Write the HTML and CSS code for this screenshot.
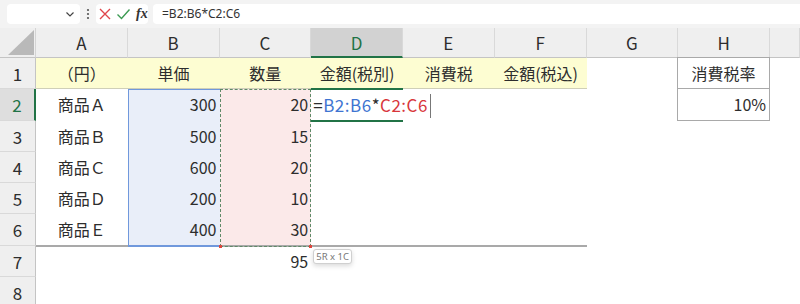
FILE: index.html
```html
<!DOCTYPE html>
<html>
  <head>
    <meta charset="utf-8" />
    <title>Book1 - 消費税</title>
    <link rel="stylesheet" href="styles.css">
  </head>
  <body>
    <div class="fbar">
      <div class="namebox">
        <svg width="10" height="10" viewBox="0 0 10 10"><path d="M1.5 3.5 L5 7 L8.5 3.5" fill="none" stroke="#444" stroke-width="1.2"/></svg>
      </div>
      <svg class="dots" width="4" height="14" viewBox="0 0 4 14"><circle cx="2" cy="3" r="1.1" fill="#555"/><circle cx="2" cy="7" r="1.1" fill="#555"/><circle cx="2" cy="11" r="1.1" fill="#555"/></svg>
      <div class="fbtns">
        <svg width="14" height="14" viewBox="0 0 14 14"><path d="M2 2 L12 12 M12 2 L2 12" stroke="#e0464b" stroke-width="1.4" fill="none"/></svg>
        <svg width="15" height="14" viewBox="0 0 15 14"><path d="M1.5 7.5 L5.5 11.5 L13.5 2.5" stroke="#3c9a52" stroke-width="1.4" fill="none"/></svg>
        <span class="fx">fx</span>
      </div>
      <div class="finput">=B2:B6*C2:C6</div>
    </div>

    <div class="sheet">
      <div class="cells">
        <div class="corner"><svg width="28" height="27" viewBox="0 0 28 27"><path d="M27 1 L27 26 L1 26 Z" fill="#b9b9b9"/></svg></div>
        <div class="ch">A</div><div class="ch">B</div><div class="ch">C</div><div class="ch sel">D</div>
        <div class="ch">E</div><div class="ch">F</div><div class="ch">G</div><div class="ch">H</div><div class="ch"></div>

        <div class="rh">1</div>
        <div class="c y mid">（円）</div><div class="c y mid">単価</div><div class="c y mid">数量</div>
        <div class="c y mid">金額(税別)</div><div class="c y mid">消費税</div><div class="c y mid">金額(税込)</div>
        <div class="c"></div><div class="c box mid">消費税率</div><div class="c"></div>

        <div class="rh sel">2</div>
        <div class="c mid">商品Ａ</div><div class="c b num">300</div><div class="c p num">20</div>
        <div class="c edit">=<span class="ref-b">B2:B6</span>*<span class="ref-c">C2:C6</span><span class="caret"></span></div>
        <div class="c"></div><div class="c"></div><div class="c"></div><div class="c box num">10%</div><div class="c"></div>

        <div class="rh">3</div>
        <div class="c mid">商品Ｂ</div><div class="c b num">500</div><div class="c p num">15</div>
        <div class="c"></div><div class="c"></div><div class="c"></div><div class="c"></div><div class="c"></div><div class="c"></div>

        <div class="rh">4</div>
        <div class="c mid">商品Ｃ</div><div class="c b num">600</div><div class="c p num">20</div>
        <div class="c"></div><div class="c"></div><div class="c"></div><div class="c"></div><div class="c"></div><div class="c"></div>

        <div class="rh">5</div>
        <div class="c mid">商品Ｄ</div><div class="c b num">200</div><div class="c p num">10</div>
        <div class="c"></div><div class="c"></div><div class="c"></div><div class="c"></div><div class="c"></div><div class="c"></div>

        <div class="rh">6</div>
        <div class="c mid">商品Ｅ</div><div class="c b num">400</div><div class="c p num">30</div>
        <div class="c"></div><div class="c"></div><div class="c"></div><div class="c"></div><div class="c"></div><div class="c"></div>

        <div class="rh">7</div>
        <div class="c"></div><div class="c"></div><div class="c num">95</div>
        <div class="c"></div><div class="c"></div><div class="c"></div><div class="c"></div><div class="c"></div><div class="c"></div>

        <div class="rh">8</div>
        <div class="c"></div><div class="c"></div><div class="c"></div>
        <div class="c"></div><div class="c"></div><div class="c"></div><div class="c"></div><div class="c"></div><div class="c"></div>
      </div>

      <div class="marks">
        <div class="total-line"></div>
        <div class="range-b"></div>
        <div class="range-c"></div>
        <div class="active"></div>
        <div class="tip">5R x 1C</div>
      </div>
    </div>
  </body>
</html>
```

FILE: styles.css
```css
body{
  margin: 0;
  background: #fff;
  overflow: hidden;
  font-family: "Noto Sans CJK JP", "Noto Sans", sans-serif;
  color: #2d2d2d;
}

/* formula bar */
.fbar{
  display: flex;
  align-items: center;
  height: 28px;
  background: #f3f3f3;
  padding-left: 7px;
}
.namebox{
  width: 73px;
  height: 20px;
  background: #fff;
  border-radius: 4px;
  display: flex;
  justify-content: flex-end;
  align-items: center;
  padding-right: 5px;
  box-sizing: border-box;
}
.dots{
  margin-left: 6px;
}
.fbtns{
  width: 52px;
  height: 20px;
  margin-left: 6px;
  background: #fff;
  border-radius: 4px;
  display: flex;
  align-items: center;
  gap: 4px;
  padding-left: 2px;
  box-sizing: border-box;
}
.fx{
  font-family: "Liberation Serif", serif;
  font-style: italic;
  font-weight: bold;
  font-size: 14px;
  color: #333;
  margin-left: 1px;
}
.finput{
  flex: 1;
  height: 20px;
  margin-left: 5px;
  background: #fff;
  border-radius: 4px 0 0 4px;
  padding-left: 9px;
  font-family: "Noto Sans", sans-serif;
  font-size: 12px;
  line-height: 20px;
  color: #333;
}

/* sheet */
.sheet{
  display: grid;
}
.cells, .marks{
  grid-area: 1 / 1;
  display: grid;
  grid-template-columns: 36px repeat(8, 91.75px) 1fr;
  grid-template-rows: 30px repeat(8, 31.3px);
}
.marks > *{
  pointer-events: none;
}
.cells > div{
  box-sizing: border-box;
  font-size: 16px;
  line-height: 31px;
  white-space: nowrap;
}
.corner{
  background: #efefef;
  border-right: 1px solid #d4d4d4;
  border-bottom: 1px solid #c4c4c4;
  display: flex;
  justify-content: flex-end;
  align-items: flex-end;
}
.corner svg{
  margin-bottom: 1px;
}
.ch{
  background: #efefef;
  border-right: 1px solid #d9d9d9;
  border-bottom: 1px solid #c4c4c4;
  text-align: center;
  line-height: 30px !important;
  font-size: 17px !important;
}
.ch.sel{
  background: #d2d2d2;
  color: #217346;
  border-bottom: 2px solid #217346;
}
.rh{
  background: #efefef;
  border-right: 1px solid #c4c4c4;
  border-bottom: 1px solid #d9d9d9;
  text-align: center;
  font-size: 17px !important;
}
.rh.sel{
  background: #dedede;
  color: #217346;
  border-right: 2px solid #217346;
}
.c.y{
  background: #fdfdd2;
  border-bottom: 1px solid #cfcfb8;
}
.c.b{
  background: #e9eef9;
}
.c.p{
  background: #fbe9e9;
}
.mid{
  text-align: center;
}
.num{
  text-align: right;
  padding-right: 3px;
}
.box{
  border: 1px solid #a9a9a9;
  margin: -1px 0 0 -1px;
  background: #fff;
}
.edit{
  padding-left: 2px;
  font-size: 17px !important;
  letter-spacing: 0.5px;
  position: relative;
  z-index: 1;
}
.ref-b{
  color: #3e74d1;
}
.ref-c{
  color: #d8363b;
}
.caret{
  display: inline-block;
  width: 1px;
  height: 24px;
  background: #777;
  margin-left: 2px;
  vertical-align: -6px;
}

/* overlays */
.total-line{
  grid-column: 2 / 8;
  grid-row: 7;
  border-bottom: 2px solid #a9a9a9;
  margin-bottom: -1px;
}
.range-b{
  grid-column: 3;
  grid-row: 3 / 8;
  border: 1px solid #7098dc;
  border-width: 1px 0 2px 1px;
  margin-bottom: -1px;
}
.range-c{
  grid-column: 4;
  grid-row: 3 / 8;
  border: 1px dashed #5f8a68;
  margin-bottom: -1px;
  position: relative;
}
.range-c::before, .range-c::after{
  content: "";
  position: absolute;
  bottom: -2px;
  width: 3px;
  height: 3px;
  background: #e0463e;
}
.range-c::before{
  left: -2px;
}
.range-c::after{
  right: -2px;
}
.active{
  grid-column: 5;
  grid-row: 3;
  border-top: 2px solid #217346;
  border-bottom: 2px solid #217346;
  margin: -1px 0 -1px 0;
}
.tip{
  grid-column: 5;
  grid-row: 8;
  justify-self: start;
  align-self: start;
  margin: 3px 0 0 2px;
  padding: 0 2px;
  font-family: "Noto Sans", sans-serif;
  font-size: 9.5px;
  line-height: 13px;
  color: #777;
  background: #fff;
  border: 1px solid #d0d0d0;
  border-radius: 3px;
  box-shadow: 0 2px 5px rgba(0,0,0,0.15);
  position: relative;
  z-index: 2;
}
```
